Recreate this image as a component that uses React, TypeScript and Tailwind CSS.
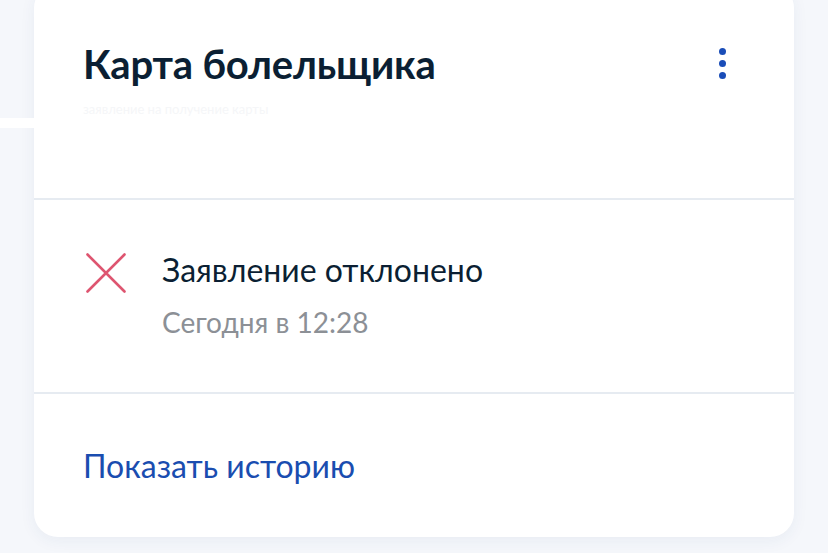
import React from 'react';

const font = { fontFamily: 'Lato, "Noto Sans", sans-serif' };

function Kebab() {
  return (
    <div className="flex flex-col items-center gap-[5px]">
      <span className="w-[7px] h-[7px] rounded-full bg-[#1a4db8]" />
      <span className="w-[7px] h-[7px] rounded-full bg-[#1a4db8]" />
      <span className="w-[7px] h-[7px] rounded-full bg-[#1a4db8]" />
    </div>
  );
}

function RejectIcon() {
  return (
    <svg width="42" height="42" viewBox="0 0 42 42" fill="none">
      <path d="M2.5 2.5L39.5 39.5M39.5 2.5L2.5 39.5" stroke="#de5570" strokeWidth="2.6" strokeLinecap="round" />
    </svg>
  );
}

export default function App() {
  return (
    <div className="w-[828px] h-[553px] overflow-hidden bg-[#f5f7fb] relative" style={font}>
      <div className="absolute left-0 top-[118px] w-[34px] h-[10px] bg-white" />
      <div className="mx-[34px] -mt-[16px] bg-white rounded-[24px] shadow-[0_4px_16px_rgba(30,60,120,0.06)]">
        <div className="h-[214px] pt-[16px]">
          <div className="flex items-start justify-between pl-[49px] pr-[68px] pt-[28px]">
            <h1 className="text-[40px] leading-[56px] font-bold text-[#0b1f33] tracking-[-0.2px] mt-[8px]">Карта болельщика</h1>
            <div className="pt-[20px]">
              <Kebab />
            </div>
          </div>
          <div className="pl-[49px] mt-[8px] text-[13px] text-[#f5f6f8]">заявление на получение карты</div>
        </div>
        <div className="border-t-[2px] border-[#e6ebf1]">
          <div className="h-[192px] flex items-start pl-[51px] pt-[52px]">
            <RejectIcon />
            <div className="ml-[35px] -mt-[2px]">
              <div className="text-[32px] leading-[40px] text-[#0b1f33]">Заявление отклонено</div>
              <div className="text-[28px] leading-[36px] mt-[14px] text-[#8c9096]">Сегодня в 12:28</div>
            </div>
          </div>
        </div>
        <div className="border-t-[2px] border-[#e6ebf1]">
          <div className="h-[143px] pl-[49px] pt-[52px]">
            <span className="text-[32px] leading-[40px] text-[#1a4db0]">Показать историю</span>
          </div>
        </div>
      </div>
    </div>
  );
}
